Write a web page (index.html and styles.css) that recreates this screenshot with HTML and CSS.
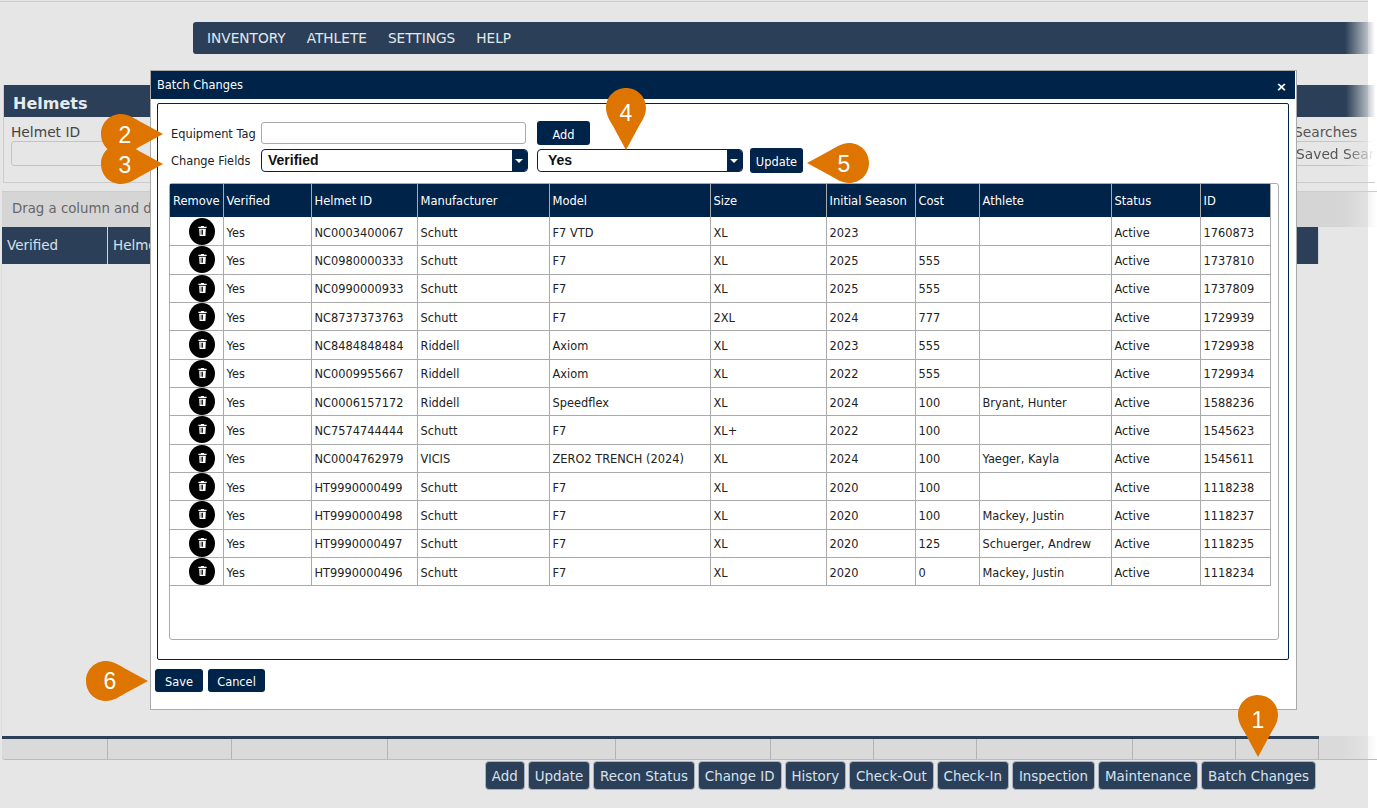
FILE: index.html
```html
<!DOCTYPE html>
<html lang="en">
<head>
  <meta charset="UTF-8">
  <title>Helmets - Batch Changes</title>
  <link rel="stylesheet" href="styles.css">
</head>
<body>
  <svg class="defs" width="0" height="0">
    <symbol id="trash" viewBox="0 0 10 12">
      <path fill="#fff" d="M3.4 0h3.2l.5 1H10v1.5H0V1h2.9zM1 3.2h8L8.5 12h-7zM2.9 4.6v6h.9v-6zm2.6 0h-1v6h1zm1.6 0v6h-.9v-6z"/>
    </symbol>
    <symbol id="pin" viewBox="0 0 40 62">
      <path fill="#dd7500" d="M20 0C31 0 40 8.5 40 20 40 27 36 33 33 38L20 62 7 38C4 33 0 27 0 20 0 8.5 9 0 20 0z"/>
    </symbol>
  </svg>

  <div class="page">
    <div class="top-line"></div>
    <nav class="main-nav">
      <a>INVENTORY</a>
      <a>ATHLETE</a>
      <a>SETTINGS</a>
      <a>HELP</a>
    </nav>

    <!-- Search panel behind the dialog -->
    <section class="panel">
      <h2>Helmets</h2>
      <div class="panel-fields">
        <div class="field">
          <label>Helmet ID</label>
          <input class="field-input" type="text">
        </div>
        <div class="field field-right">
          <label>Saved Searches</label>
          <div class="field-input saved">Saved Searches</div>
        </div>
      </div>
    </section>

    <div class="group-bar">Drag a column and drop</div>
    <div class="grid-cols grid-head">
      <div>Verified</div>
      <div>Helmet ID</div>
      <div></div><div></div><div></div><div></div><div></div><div></div><div></div><div></div>
    </div>
    <div class="grid-body"></div>
    <div class="grid-foot">
      <div class="grid-cols">
        <div></div><div></div><div></div><div></div><div></div><div></div><div></div><div></div><div></div><div></div>
      </div>
    </div>

    <div class="actions">
      <button>Add</button>
      <button>Update</button>
      <button>Recon Status</button>
      <button>Change ID</button>
      <button>History</button>
      <button>Check-Out</button>
      <button>Check-In</button>
      <button>Inspection</button>
      <button>Maintenance</button>
      <button>Batch Changes</button>
    </div>
  </div>

  <!-- Batch Changes dialog -->
  <div class="modal">
    <div class="modal-title">
      <span>Batch Changes</span>
      <span class="modal-close">×</span>
    </div>
    <div class="modal-box">
      <div class="form-row row-tag">
        <label>Equipment Tag</label>
        <input class="tag-input" type="text">
        <button class="btn btn-add">Add</button>
      </div>
      <div class="form-row row-change">
        <label>Change Fields</label>
        <div class="select select-field">Verified<span class="select-arrow"></span></div>
        <div class="select select-value">Yes<span class="select-arrow"></span></div>
        <button class="btn btn-update">Update</button>
      </div>
      <div class="table-wrap">
        <table class="batch-table">
          <colgroup>
            <col class="c-remove"><col class="c-verified"><col class="c-helmet"><col class="c-manu"><col class="c-model"><col class="c-size"><col class="c-season"><col class="c-cost"><col class="c-athlete"><col class="c-status"><col class="c-id">
          </colgroup>
          <thead>
            <tr><th>Remove</th><th>Verified</th><th>Helmet ID</th><th>Manufacturer</th><th>Model</th><th>Size</th><th>Initial Season</th><th>Cost</th><th>Athlete</th><th>Status</th><th>ID</th></tr>
          </thead>
          <tbody>
            <tr><td><span class="trash"><svg><use href="#trash"/></svg></span></td><td>Yes</td><td>NC0003400067</td><td>Schutt</td><td>F7 VTD</td><td>XL</td><td>2023</td><td></td><td></td><td>Active</td><td>1760873</td></tr>
            <tr><td><span class="trash"><svg><use href="#trash"/></svg></span></td><td>Yes</td><td>NC0980000333</td><td>Schutt</td><td>F7</td><td>XL</td><td>2025</td><td>555</td><td></td><td>Active</td><td>1737810</td></tr>
            <tr><td><span class="trash"><svg><use href="#trash"/></svg></span></td><td>Yes</td><td>NC0990000933</td><td>Schutt</td><td>F7</td><td>XL</td><td>2025</td><td>555</td><td></td><td>Active</td><td>1737809</td></tr>
            <tr><td><span class="trash"><svg><use href="#trash"/></svg></span></td><td>Yes</td><td>NC8737373763</td><td>Schutt</td><td>F7</td><td>2XL</td><td>2024</td><td>777</td><td></td><td>Active</td><td>1729939</td></tr>
            <tr><td><span class="trash"><svg><use href="#trash"/></svg></span></td><td>Yes</td><td>NC8484848484</td><td>Riddell</td><td>Axiom</td><td>XL</td><td>2023</td><td>555</td><td></td><td>Active</td><td>1729938</td></tr>
            <tr><td><span class="trash"><svg><use href="#trash"/></svg></span></td><td>Yes</td><td>NC0009955667</td><td>Riddell</td><td>Axiom</td><td>XL</td><td>2022</td><td>555</td><td></td><td>Active</td><td>1729934</td></tr>
            <tr><td><span class="trash"><svg><use href="#trash"/></svg></span></td><td>Yes</td><td>NC0006157172</td><td>Riddell</td><td>Speedflex</td><td>XL</td><td>2024</td><td>100</td><td>Bryant, Hunter</td><td>Active</td><td>1588236</td></tr>
            <tr><td><span class="trash"><svg><use href="#trash"/></svg></span></td><td>Yes</td><td>NC7574744444</td><td>Schutt</td><td>F7</td><td>XL+</td><td>2022</td><td>100</td><td></td><td>Active</td><td>1545623</td></tr>
            <tr><td><span class="trash"><svg><use href="#trash"/></svg></span></td><td>Yes</td><td>NC0004762979</td><td>VICIS</td><td>ZERO2 TRENCH (2024)</td><td>XL</td><td>2024</td><td>100</td><td>Yaeger, Kayla</td><td>Active</td><td>1545611</td></tr>
            <tr><td><span class="trash"><svg><use href="#trash"/></svg></span></td><td>Yes</td><td>HT9990000499</td><td>Schutt</td><td>F7</td><td>XL</td><td>2020</td><td>100</td><td></td><td>Active</td><td>1118238</td></tr>
            <tr><td><span class="trash"><svg><use href="#trash"/></svg></span></td><td>Yes</td><td>HT9990000498</td><td>Schutt</td><td>F7</td><td>XL</td><td>2020</td><td>100</td><td>Mackey, Justin</td><td>Active</td><td>1118237</td></tr>
            <tr><td><span class="trash"><svg><use href="#trash"/></svg></span></td><td>Yes</td><td>HT9990000497</td><td>Schutt</td><td>F7</td><td>XL</td><td>2020</td><td>125</td><td>Schuerger, Andrew</td><td>Active</td><td>1118235</td></tr>
            <tr><td><span class="trash"><svg><use href="#trash"/></svg></span></td><td>Yes</td><td>HT9990000496</td><td>Schutt</td><td>F7</td><td>XL</td><td>2020</td><td>0</td><td>Mackey, Justin</td><td>Active</td><td>1118234</td></tr>
          </tbody>
        </table>
      </div>
    </div>
    <div class="modal-foot">
      <button class="btn btn-save">Save</button>
      <button class="btn btn-cancel">Cancel</button>
    </div>
  </div>

  <!-- Numbered callouts over the screenshot -->
  <div class="pin pin-down pin-1"><svg><use href="#pin"/></svg><span>1</span></div>
  <div class="pin pin-right pin-2"><svg><use href="#pin"/></svg><span>2</span></div>
  <div class="pin pin-right pin-3"><svg><use href="#pin"/></svg><span>3</span></div>
  <div class="pin pin-down pin-4"><svg><use href="#pin"/></svg><span>4</span></div>
  <div class="pin pin-left pin-5"><svg><use href="#pin"/></svg><span>5</span></div>
  <div class="pin pin-right pin-6"><svg><use href="#pin"/></svg><span>6</span></div>
</body>
</html>
```

FILE: styles.css
```css
/* General Reset */
* {
  margin: 0;
  padding: 0;
  box-sizing: border-box;
}

body {
  font-family: "DejaVu Sans", sans-serif;
  font-size: 11.4px;
  background-color: #fff;
  height: 808px;
  overflow: hidden;
}

.defs {
  position: absolute;
}

/* Page behind the dialog */
.page {
  width: 1368px;
  height: 808px;
  background-color: #e6e6e6;
  display: flex;
  flex-direction: column;
}

.top-line {
  height: 2px;
  border-bottom: 1px solid #ccc;
  flex: none;
}

.main-nav {
  flex: none;
  width: 1182px;
  height: 32px;
  margin: 20px 0 0 193px;
  padding-left: 14px;
  border-radius: 3px 0 0 3px;
  background: linear-gradient(90deg, #2b4058 1152px, rgba(43, 64, 88, 0) 1182px);
  display: flex;
  align-items: center;
  gap: 21px;
  color: #e3e8ee;
  font-size: 13.7px;
}

.panel {
  flex: none;
  width: 1372px;
  height: 98px;
  margin: 31px 0 0 3px;
  border-left: 1px solid #ccc;
  border-bottom: 1px solid #ccc;
}

.panel h2 {
  height: 32px;
  padding-left: 9px;
  line-height: 38px;
  font-size: 16px;
  color: #e6ebf0;
  background: linear-gradient(90deg, #2b4058 1342px, rgba(43, 64, 88, 0) 1372px);
}

.panel-fields {
  display: flex;
  justify-content: space-between;
  padding: 7px 0 0 7px;
  color: #444;
  font-size: 13.8px;
}

.field label {
  display: block;
  height: 17px;
}

.field-input {
  display: block;
  width: 120px;
  height: 25px;
  border: 1px solid #c4c4c4;
  border-radius: 3px;
  background-color: #e6e6e6;
}

.field-right {
  width: 79px;
  color: #555;
}

.field-right label {
  white-space: nowrap;
  margin-left: -49px;
}

.saved {
  width: 79px;
  padding: 4px 0 0 0;
  border-width: 1px 0;
  border-radius: 0;
  background-color: transparent;
  white-space: nowrap;
  overflow: hidden;
  -webkit-mask-image: linear-gradient(90deg, #000 50px, transparent 79px);
  mask-image: linear-gradient(90deg, #000 50px, transparent 79px);
}

.group-bar {
  flex: none;
  width: 1375px;
  height: 36px;
  margin: 8px 0 0 2px;
  padding-left: 10px;
  line-height: 33px;
  font-size: 13.3px;
  color: #666;
  white-space: nowrap;
  background: linear-gradient(90deg, #d5d5d5 1340px, rgba(213, 213, 213, 0) 1375px);
  border-top: 1px solid #ccc;
}

.grid-cols {
  display: grid;
  grid-template-columns: 106px 124px 156px 228px 155px 103px 103px 156px 103px 83px;
  width: 1317px;
}

.grid-head {
  flex: none;
  height: 37px;
  margin-left: 2px;
  background-color: #2b4058;
  color: #d8e0e8;
  font-size: 13.5px;
  line-height: 37px;
}

.grid-head > div {
  padding-left: 5px;
  border-right: 1px solid #d0d6dc;
  white-space: nowrap;
  overflow: hidden;
}

.grid-body {
  flex: 1;
  margin-left: 1px;
  border-left: 1px solid #dcdcdc;
}

.grid-foot {
  flex: none;
  width: 1375px;
  height: 24px;
  margin-left: 2px;
  border-bottom: 1px solid #bbb;
  border-radius: 0 0 0 3px;
  background: linear-gradient(90deg, #dadada 1340px, rgba(218, 218, 218, 0) 1375px);
}

.grid-foot .grid-cols {
  height: 23px;
  border-top: 3px solid #2b4058;
}

.grid-foot .grid-cols > div {
  border-right: 1px solid #b4b4b4;
}

.actions {
  flex: none;
  height: 48px;
  padding: 1px 52px 0 0;
  display: flex;
  justify-content: flex-end;
  align-items: flex-start;
  gap: 3px;
}

.actions button {
  height: 29px;
  padding: 2px 5.95px 0;
  border: 1px solid #a9b4c0;
  border-radius: 4px;
  background-color: #2b4058;
  color: #d8e2ee;
  font-family: inherit;
  font-size: 13.4px;
}

/* Dialog */
.modal {
  position: absolute;
  left: 150px;
  top: 70px;
  width: 1147px;
  height: 640px;
  border: 1px solid #aaa;
  background-color: #fff;
}

.modal-title {
  width: 1144px;
  height: 28px;
  padding: 0 8px 0 6px;
  background-color: #00234a;
  color: #fff;
  display: flex;
  justify-content: space-between;
  align-items: center;
}

.modal-close {
  font-size: 13px;
  font-weight: bold;
  padding-top: 2px;
}

.modal-box {
  width: 1132px;
  height: 557px;
  margin: 4px 0 0 6px;
  padding: 17px 0 0 11px;
  border: 1px solid #00234a;
  border-radius: 2px;
}

.form-row {
  display: flex;
  align-items: center;
}

.form-row label {
  width: 92px;
  padding: 1px 0 0 2px;
  color: #222;
  white-space: nowrap;
}

.row-tag {
  height: 24px;
}

.row-change {
  height: 25px;
  margin-top: 3px;
}

.tag-input {
  width: 265px;
  height: 22px;
  border: 1px solid #aaa;
  border-radius: 3px;
}

.btn {
  height: 24px;
  border: none;
  border-radius: 3px;
  background-color: #00234a;
  color: #fff;
  font-family: inherit;
  font-size: 11.4px;
}

.btn-add {
  width: 53px;
  margin-left: 11px;
  padding-top: 3px;
}

.btn-update {
  width: 53px;
  height: 25px;
  margin-left: 7px;
  padding-top: 2px;
}

.select {
  position: relative;
  height: 23px;
  padding-left: 6px;
  border: 1px solid #00234a;
  border-radius: 4px;
  font-family: "Liberation Sans", sans-serif;
  font-size: 14px;
  font-weight: bold;
  line-height: 21px;
  color: #111;
}

.select-field {
  width: 267px;
}

.select-value {
  width: 206px;
  margin-left: 9px;
  padding-left: 10px;
}

.select-arrow {
  position: absolute;
  top: 0;
  right: 0;
  width: 15px;
  height: 21px;
  background-color: #00234a;
  border-radius: 0 3px 3px 0;
}

.select-arrow::after {
  content: "";
  position: absolute;
  left: 3px;
  top: 9px;
  border: 4px solid transparent;
  border-top: 4px solid #fff;
  border-bottom: none;
}

.table-wrap {
  width: 1110px;
  height: 457px;
  margin-top: 10px;
  border: 1px solid #aaa;
  border-radius: 3px;
}

.batch-table {
  table-layout: fixed;
  width: 1101px;
  border-collapse: separate;
  border-spacing: 0;
  color: #222;
}

.c-remove { width: 54px; }
.c-verified { width: 88px; }
.c-helmet { width: 106px; }
.c-manu { width: 132px; }
.c-model { width: 161px; }
.c-size { width: 116px; }
.c-season { width: 89px; }
.c-cost { width: 64px; }
.c-athlete { width: 132px; }
.c-status { width: 89px; }
.c-id { width: 70px; }

.batch-table th {
  height: 33px;
  padding: 0 0 0 2.5px;
  background-color: #00234a;
  color: #fff;
  font-size: 11.5px;
  font-weight: normal;
  text-align: left;
  white-space: nowrap;
  border-right: 1px solid #aaa;
}

.batch-table th:first-child {
  padding-left: 3px;
}

.batch-table td {
  height: 28.33px;
  padding: 2px 0 0 2.5px;
  border-right: 1px solid #aaa;
  border-bottom: 1px solid #aaa;
  white-space: nowrap;
}

.batch-table tbody tr:first-child td {
  height: 29.33px;
  padding-top: 4px;
}

.batch-table td:first-child,
.batch-table tbody tr:first-child td:first-child {
  padding: 0 0 0 2px;
}

.trash {
  width: 26px;
  height: 27px;
  margin-left: 17px;
  border-radius: 50%;
  background-color: #000;
  display: flex;
  justify-content: center;
  padding-top: 8px;
}

.trash svg {
  width: 9px;
  height: 10px;
}

.modal-foot {
  display: flex;
  gap: 5px;
  margin: 9px 0 0 4px;
}

.btn-save {
  width: 48px;
  height: 23px;
  padding-top: 2px;
}

.btn-cancel {
  width: 57px;
  height: 23px;
  padding-top: 2px;
}

/* Callouts */
.pin {
  position: absolute;
  width: 40px;
  height: 62px;
}

.pin svg {
  display: block;
  width: 40px;
  height: 62px;
  transform-origin: 20px 20px;
}

.pin span {
  position: absolute;
  left: 0;
  top: 0;
  width: 40px;
  height: 40px;
  font-family: "Liberation Sans", sans-serif;
  font-size: 23px;
  line-height: 40px;
  text-align: center;
  color: #fff;
}

.pin-down span { top: 5px; }
.pin-right svg { transform: rotate(-90deg); }
.pin-right span { left: 4px; top: 1px; }
.pin-left svg { transform: rotate(90deg); }
.pin-left span { left: -5px; top: 1px; }
.pin-6 span { top: 0; }

.pin-1 { left: 1238px; top: 695px; }
.pin-2 { left: 101px; top: 114px; }
.pin-3 { left: 101px; top: 144px; }
.pin-4 { left: 606px; top: 88px; }
.pin-5 { left: 829px; top: 143px; }
.pin-6 { left: 86px; top: 661px; }
```
